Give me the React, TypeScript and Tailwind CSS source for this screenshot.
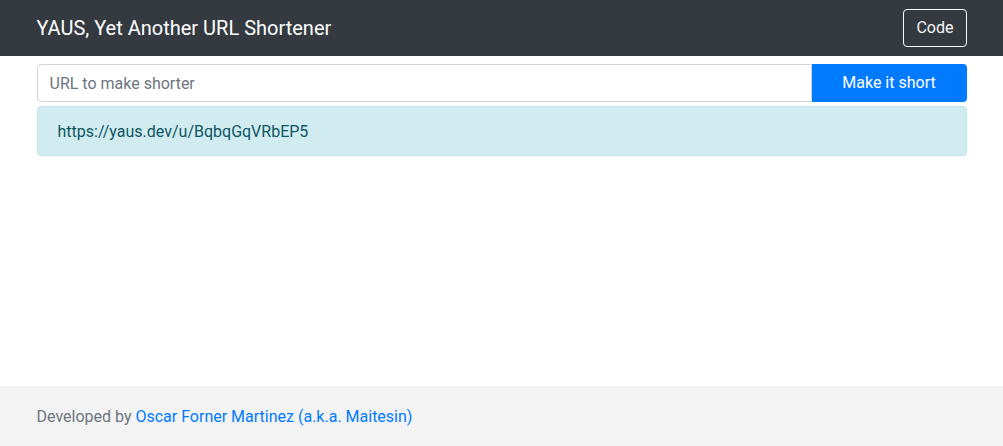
export default function App() {
  return (
    <div className="flex min-h-screen flex-col bg-white text-base text-[#212529]" style={{ fontFamily: 'Roboto, "Liberation Sans", sans-serif' }}>
      <nav className="flex h-[56px] items-center bg-[#343a40]">
        <div className="mx-auto flex w-[930px] items-center justify-between">
          <span className="text-[20px] leading-[30px] text-white">YAUS, Yet Another URL Shortener</span>
          <button className="h-[38px] rounded-[4px] border border-[#f8f9fa] px-[12px] text-base leading-[24px] text-[#f8f9fa]">Code</button>
        </div>
      </nav>
      <main className="mx-auto w-[930px] pt-[8px]">
        <div className="flex">
          <input
            className="h-[38px] flex-1 rounded-l-[4px] border border-[#ced4da] px-[12px] text-base text-[#495057] outline-none placeholder:text-[#6c757d]"
            placeholder="URL to make shorter"
          />
          <button className="h-[38px] w-[155px] rounded-r-[4px] bg-[#007bff] px-[12px] text-base leading-[24px] text-white">Make it short</button>
        </div>
        <div className="mt-[4px] rounded-[4px] border border-[#bee5eb] bg-[#d1ecf1] px-[20px] pt-[13px] pb-[11px] leading-[24px] text-[#0c5460]">
          https://yaus.dev/u/BqbqGqVRbEP5
        </div>
      </main>
      <footer className="mt-auto h-[60px] bg-[#f3f3f3]">
        <div className="mx-auto w-[930px] pt-[2px] leading-[58px] text-[#6c757d]">
          Developed by <a className="text-[#007bff]" href="#">Oscar Forner Martinez (a.k.a. Maitesin)</a>
        </div>
      </footer>
    </div>
  );
}
